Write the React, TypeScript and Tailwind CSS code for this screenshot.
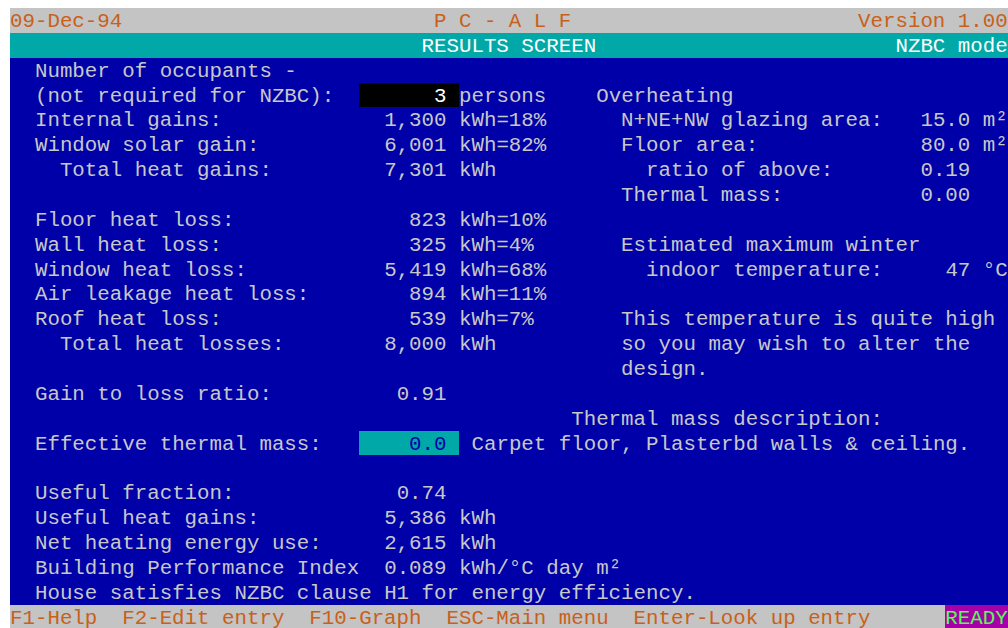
type Seg = [number, string, string?];

type Line = { tone?: string; segs: Seg[] };

// each line is an 80-column text row; segments are placed by column
const lines: Line[] = [
  {
    tone: 'bg-[#c4c4c4] text-[#c8601a]',
    segs: [
      [0, '09-Dec-94'],
      [34, 'P C - A L F'],
      [68, 'Version 1.00'],
    ],
  },
  {
    tone: 'bg-[#00a8a8] text-white',
    segs: [
      [33, 'RESULTS SCREEN'],
      [71, 'NZBC mode'],
    ],
  },
  { segs: [[2, 'Number of occupants -']] },
  {
    segs: [
      [2, '(not required for NZBC):'],
      [28, '      3 ', 'bg-black text-white'],
      [36, 'persons'],
      [47, 'Overheating'],
    ],
  },
  {
    segs: [
      [2, 'Internal gains:'],
      [30, '1,300 kWh=18%'],
      [49, 'N+NE+NW glazing area:'],
      [73, '15.0 m²'],
    ],
  },
  {
    segs: [
      [2, 'Window solar gain:'],
      [30, '6,001 kWh=82%'],
      [49, 'Floor area:'],
      [73, '80.0 m²'],
    ],
  },
  {
    segs: [
      [4, 'Total heat gains:'],
      [30, '7,301 kWh'],
      [51, 'ratio of above:'],
      [73, '0.19'],
    ],
  },
  {
    segs: [
      [49, 'Thermal mass:'],
      [73, '0.00'],
    ],
  },
  {
    segs: [
      [2, 'Floor heat loss:'],
      [32, '823 kWh=10%'],
    ],
  },
  {
    segs: [
      [2, 'Wall heat loss:'],
      [32, '325 kWh=4%'],
      [49, 'Estimated maximum winter'],
    ],
  },
  {
    segs: [
      [2, 'Window heat loss:'],
      [30, '5,419 kWh=68%'],
      [51, 'indoor temperature:'],
      [75, '47 °C'],
    ],
  },
  {
    segs: [
      [2, 'Air leakage heat loss:'],
      [32, '894 kWh=11%'],
    ],
  },
  {
    segs: [
      [2, 'Roof heat loss:'],
      [32, '539 kWh=7%'],
      [49, 'This temperature is quite high'],
    ],
  },
  {
    segs: [
      [4, 'Total heat losses:'],
      [30, '8,000 kWh'],
      [49, 'so you may wish to alter the'],
    ],
  },
  { segs: [[49, 'design.']] },
  {
    segs: [
      [2, 'Gain to loss ratio:'],
      [31, '0.91'],
    ],
  },
  { segs: [[45, 'Thermal mass description:']] },
  {
    segs: [
      [2, 'Effective thermal mass:'],
      [28, '    0.0 ', 'bg-[#00a8a8] text-[#0000a8]'],
      [37, 'Carpet floor, Plasterbd walls & ceiling.'],
    ],
  },
  { segs: [] },
  {
    segs: [
      [2, 'Useful fraction:'],
      [31, '0.74'],
    ],
  },
  {
    segs: [
      [2, 'Useful heat gains:'],
      [30, '5,386 kWh'],
    ],
  },
  {
    segs: [
      [2, 'Net heating energy use:'],
      [30, '2,615 kWh'],
    ],
  },
  {
    segs: [
      [2, 'Building Performance Index'],
      [30, '0.089 kWh/°C day m²'],
    ],
  },
  { segs: [[2, 'House satisfies NZBC clause H1 for energy efficiency.']] },
  {
    tone: 'bg-[#c4c4c4] text-[#c8601a]',
    segs: [
      [0, 'F1-Help  F2-Edit entry  F10-Graph  ESC-Main menu  Enter-Look up entry'],
      [75, 'READY', 'bg-[#a800a8] text-[#54fc54]'],
    ],
  },
];

function TextRow({ tone, segs }: Line) {
  const parts: React.ReactNode[] = [];
  let col = 0;
  segs.forEach(([at, text, cls], i) => {
    if (at > col) parts.push(<span key={`gap${i}`}>{' '.repeat(at - col)}</span>);
    parts.push(
      <span key={i} className={cls}>
        {text}
      </span>
    );
    col = at + text.length;
  });
  if (col < 80) parts.push(<span key="tail">{' '.repeat(80 - col)}</span>);

  return (
    <div className={`flex h-[24.86px] whitespace-pre leading-[27px] ${tone ?? 'text-[#c8c8c8]'}`}>
      {parts}
    </div>
  );
}

export default function App() {
  return (
    <div className="h-[628px] w-[1008px] overflow-hidden bg-white pl-[10px] pt-[8px]">
      <div className="w-[998px] bg-[#0000a8] font-['Liberation_Mono',monospace] text-[20.79px]">
        {lines.map((l, i) => (
          <TextRow key={i} {...l} />
        ))}
      </div>
    </div>
  );
}
